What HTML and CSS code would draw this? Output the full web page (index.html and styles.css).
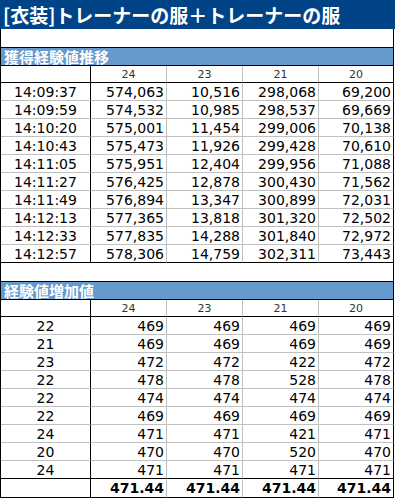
FILE: index.html
```html
<!DOCTYPE html>
<html lang="ja">
<head>
<meta charset="utf-8">
<link rel="stylesheet" href="styles.css">
</head>
<body>
<div class="title">[衣装]トレーナーの服＋トレーナーの服</div>
<table class="sheet">
  <colgroup>
    <col class="c-first"><col class="c-num"><col class="c-num"><col class="c-num"><col class="c-last">
  </colgroup>
  <tr class="blank"><td colspan="5">&nbsp;</td></tr>
  <tr class="sec"><td colspan="5">獲得経験値推移</td></tr>
  <tr class="head"><td>&nbsp;</td><td>24</td><td>23</td><td>21</td><td>20</td></tr>
  <tr class="row"><td class="lab">14:09:37</td><td>574,063</td><td>10,516</td><td>298,068</td><td>69,200</td></tr>
  <tr class="row"><td class="lab">14:09:59</td><td>574,532</td><td>10,985</td><td>298,537</td><td>69,669</td></tr>
  <tr class="row"><td class="lab">14:10:20</td><td>575,001</td><td>11,454</td><td>299,006</td><td>70,138</td></tr>
  <tr class="row"><td class="lab">14:10:43</td><td>575,473</td><td>11,926</td><td>299,428</td><td>70,610</td></tr>
  <tr class="row"><td class="lab">14:11:05</td><td>575,951</td><td>12,404</td><td>299,956</td><td>71,088</td></tr>
  <tr class="row"><td class="lab">14:11:27</td><td>576,425</td><td>12,878</td><td>300,430</td><td>71,562</td></tr>
  <tr class="row"><td class="lab">14:11:49</td><td>576,894</td><td>13,347</td><td>300,899</td><td>72,031</td></tr>
  <tr class="row"><td class="lab">14:12:13</td><td>577,365</td><td>13,818</td><td>301,320</td><td>72,502</td></tr>
  <tr class="row"><td class="lab">14:12:33</td><td>577,835</td><td>14,288</td><td>301,840</td><td>72,972</td></tr>
  <tr class="row end"><td class="lab">14:12:57</td><td>578,306</td><td>14,759</td><td>302,311</td><td>73,443</td></tr>
  <tr class="blank"><td colspan="5">&nbsp;</td></tr>
  <tr class="sec"><td colspan="5">経験値増加値</td></tr>
  <tr class="head"><td>&nbsp;</td><td>24</td><td>23</td><td>21</td><td>20</td></tr>
  <tr class="row"><td class="lab">22</td><td>469</td><td>469</td><td>469</td><td>469</td></tr>
  <tr class="row"><td class="lab">21</td><td>469</td><td>469</td><td>469</td><td>469</td></tr>
  <tr class="row"><td class="lab">23</td><td>472</td><td>472</td><td>422</td><td>472</td></tr>
  <tr class="row"><td class="lab">22</td><td>478</td><td>478</td><td>528</td><td>478</td></tr>
  <tr class="row"><td class="lab">22</td><td>474</td><td>474</td><td>474</td><td>474</td></tr>
  <tr class="row"><td class="lab">22</td><td>469</td><td>469</td><td>469</td><td>469</td></tr>
  <tr class="row"><td class="lab">24</td><td>471</td><td>471</td><td>421</td><td>471</td></tr>
  <tr class="row"><td class="lab">20</td><td>470</td><td>470</td><td>520</td><td>470</td></tr>
  <tr class="row end"><td class="lab">24</td><td>471</td><td>471</td><td>471</td><td>471</td></tr>
  <tr class="total end"><td>&nbsp;</td><td>471.44</td><td>471.44</td><td>471.44</td><td>471.44</td></tr>
</table>
</body>
</html>
```
FILE: styles.css
```css
html, body {
  margin: 0;
  padding: 0;
  background: #ffffff;
}

body {
  width: 395px;
  font-family: "DejaVu Sans", "Noto Sans CJK JP", sans-serif;
  color: #000000;
}

.title {
  height: 29px;
  line-height: 29px;
  background: #004386;
  color: #ffffff;
  font-family: "Noto Sans CJK JP", sans-serif;
  font-weight: bold;
  font-size: 19px;
  padding-left: 3px;
  white-space: nowrap;
}

.sheet {
  width: 394px;
  table-layout: fixed;
  border-collapse: separate;
  border-spacing: 0;
  border-left: 1px solid #000000;
}

.c-first { width: 90px; }
.c-num { width: 76px; }
.c-last { width: 75px; }

.sheet td {
  padding: 0 2px;
  line-height: 17px;
  font-size: 14px;
  border-right: 1px solid #c0c0c0;
  border-bottom: 1px solid #c0c0c0;
  text-align: right;
  white-space: nowrap;
}

.row td {
  padding-top: 1px;
  line-height: 16px;
}

.sheet td:first-child,
.sheet td:last-child {
  border-right-color: #000000;
}

.blank td {
  line-height: 18px;
  border-bottom-color: #000000;
}

.sec td {
  background: #6699cc;
  color: #ffffff;
  font-family: "Noto Sans CJK JP", sans-serif;
  font-weight: bold;
  font-size: 15px;
  line-height: 17px;
  text-align: left;
  padding-left: 3px;
  border-bottom-color: #000000;
}

.head td {
  line-height: 16px;
  padding-top: 1px;
  padding-bottom: 0;
  font-size: 11px;
  color: #333333;
  text-align: center;
  border-bottom-color: #000000;
}

.head td {
  line-height: 15px;
}

.lab {
  text-align: center !important;
}

.end td {
  border-bottom-color: #000000;
}

.total td {
  font-weight: bold;
  line-height: 18px;
}
```
